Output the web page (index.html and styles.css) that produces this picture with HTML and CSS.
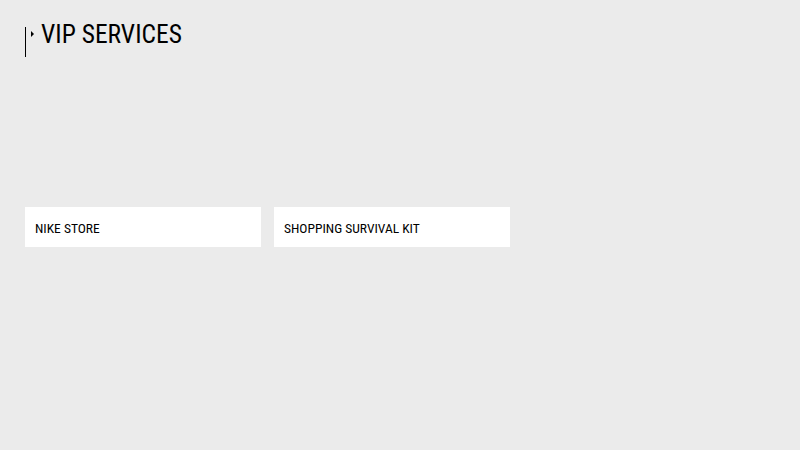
FILE: index.html
```html
<!DOCTYPE html>
<html>
<head>
<meta charset="utf-8">
<link rel="stylesheet" href="styles.css">
</head>
<body>
<div class="page">
  <header class="heading">
    <span class="bar"></span>
    <span class="arrow"></span>
    <h1 class="title">VIP SERVICES</h1>
  </header>
  <div class="cards">
    <div class="card">NIKE STORE</div>
    <div class="card">SHOPPING SURVIVAL KIT</div>
  </div>
</div>
</body>
</html>
```
FILE: styles.css
```css
html, body {
  margin: 0;
  padding: 0;
  background: #ebebeb;
  width: 800px;
  height: 450px;
  overflow: hidden;
}
.page {
  padding: 20px 25px;
  font-family: Roboto, "DejaVu Sans Condensed", sans-serif;
  font-stretch: condensed;
  color: #000;
}
.heading {
  display: flex;
  align-items: flex-start;
  height: 37px;
}
.bar {
  width: 1px;
  height: 30px;
  margin-top: 7px;
  background: #000;
}
.arrow {
  width: 0;
  height: 0;
  margin: 11px 0 0 5px;
  border-top: 3px solid transparent;
  border-bottom: 3px solid transparent;
  border-left: 3px solid #000;
}
.title {
  margin: 0 0 0 7px;
  font-size: 25.5px;
  font-weight: 400;
  line-height: 28px;
}
.cards {
  display: flex;
  gap: 13px;
  margin-top: 150px;
}
.card {
  width: 236px;
  height: 40px;
  box-sizing: border-box;
  background: #fff;
  padding: 0 10px;
  display: flex;
  align-items: center;
  font-size: 13.5px;
  font-weight: 400;
  padding-top: 2px;
}
```
